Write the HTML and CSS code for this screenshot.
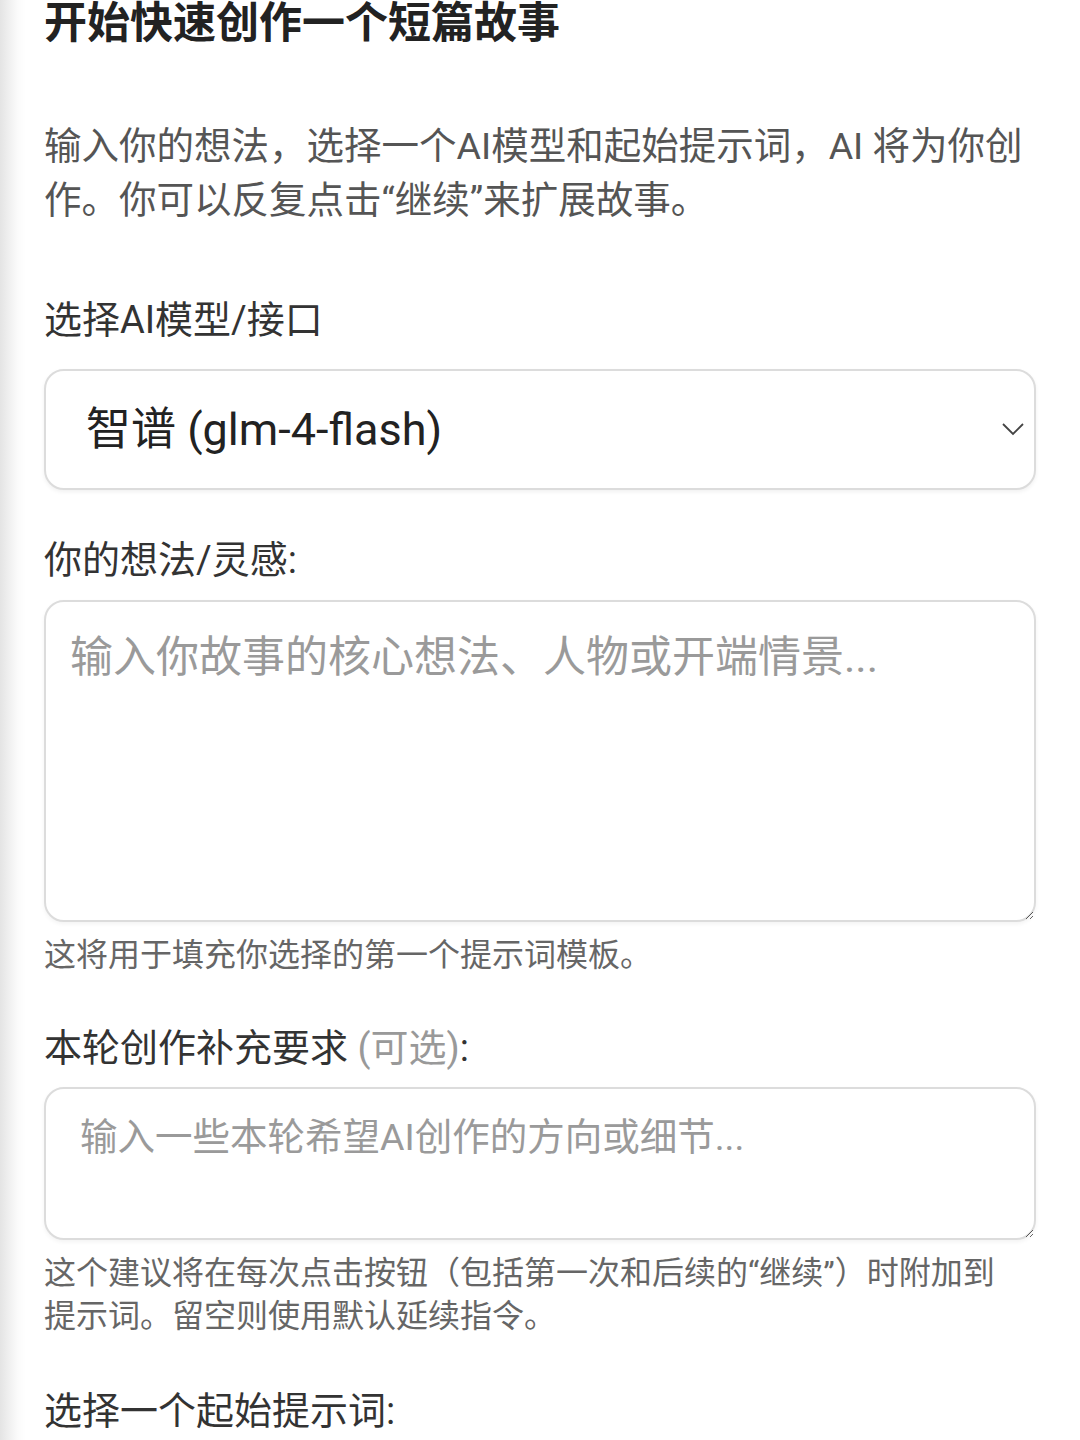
FILE: index.html
```html
<!DOCTYPE html>
<html lang="zh-CN">
<head>
  <meta charset="UTF-8" />
  <meta name="viewport" content="width=device-width, initial-scale=1.0"/>
  <title>短篇故事创作</title>
  <link rel="stylesheet" href="styles.css">
</head>
<body>

  <!-- STORY FORM -->
  <div class="story-page">
    <h1 class="page-title">开始快速创作一个短篇故事</h1>

    <p class="intro">输入你的想法，选择一个AI模型和起始提示词，AI 将为你创作。你可以反复点击“继续”来扩展故事。</p>

    <label class="field-label model-label" for="model">选择AI模型/接口</label>
    <div class="select-wrap">
      <select id="model" class="model-select">
        <option>智谱 (glm-4-flash)</option>
      </select>
      <svg class="chevron" width="22" height="13" viewBox="0 0 22 13" fill="none">
        <path d="M1 1 L11 11 L21 1" stroke="#444" stroke-width="1.8" />
      </svg>
    </div>

    <label class="field-label idea-label" for="idea">你的想法/灵感:</label>
    <textarea id="idea" class="idea-input" placeholder="输入你故事的核心想法、人物或开端情景..."></textarea>
    <p class="hint">这将用于填充你选择的第一个提示词模板。</p>

    <label class="field-label extra-label" for="extra">本轮创作补充要求 <span class="optional">(可选)</span>:</label>
    <textarea id="extra" class="extra-input" placeholder="输入一些本轮希望AI创作的方向或细节..."></textarea>
    <p class="hint">这个建议将在每次点击按钮（包括第一次和后续的“继续”）时附加到提示词。留空则使用默认延续指令。</p>

    <label class="field-label prompt-label">选择一个起始提示词:</label>
  </div>

</body>
</html>
```

FILE: styles.css
```css
* {
  margin: 0;
  padding: 0;
  box-sizing: border-box;
}

body, html {
  /* latin + curly quotes from Roboto, han from the CJK face */
  font-family: Roboto, "Noto Sans CJK SC", sans-serif;
  height: 100%;
  overflow: hidden;
}

body {
  /* grey edge on the left, like the app drawer shadow */
  background: linear-gradient(to right, #e4e4e4 0, #f1f1f1 10px, #fbfbfb 18px, #fff 26px);
}

.story-page {
  display: flex;
  flex-direction: column;
  padding: 0 44px;
}

.page-title {
  font-size: 43px;
  line-height: 46px;
  font-weight: 700;
  color: #222;
}

.intro {
  margin-top: 73px;
  font-size: 37.5px;
  line-height: 54px;
  color: #555;
}

.field-label {
  display: block;
  font-size: 38px;
  line-height: 50px;
  color: #333;
}

.model-label {
  margin-top: 68px;
}

.idea-label {
  margin-top: 45px;
}

.extra-label {
  margin-top: 46px;
}

.prompt-label {
  margin-top: 48px;
}

.optional {
  color: #999;
}

.select-wrap {
  position: relative;
  margin-top: 24px;
}

.model-select {
  appearance: none;
  -webkit-appearance: none;
  width: 100%;
  height: 121px;
  padding: 0 60px 0 40px;
  font-family: inherit;
  font-size: 45px;
  color: #222;
  background: #fff;
  border: 2px solid #dcdcdc;
  border-radius: 20px;
  box-shadow: 0 2px 4px rgba(0, 0, 0, 0.06);
  outline: none;
}

.chevron {
  position: absolute;
  right: 12px;
  top: 54px;
  pointer-events: none;
}

textarea {
  width: 100%;
  font-family: inherit;
  color: #222;
  background: #fff;
  border: 2px solid #dcdcdc;
  border-radius: 20px;
  box-shadow: 0 2px 4px rgba(0, 0, 0, 0.05);
  outline: none;
  resize: vertical;
}

textarea::placeholder {
  color: #9a9a9a;
}

.idea-input {
  margin-top: 15px;
  height: 322px;
  padding: 25px 24px 23px;
  font-size: 43px;
  line-height: 60px;
}

.extra-input {
  margin-top: 14px;
  height: 153px;
  padding: 22px 34px 20px;
  font-size: 37.5px;
  line-height: 52px;
}

.hint {
  margin-top: 12px;
  padding-right: 20px;
  font-size: 32px;
  line-height: 43px;
  color: #666;
}
```
